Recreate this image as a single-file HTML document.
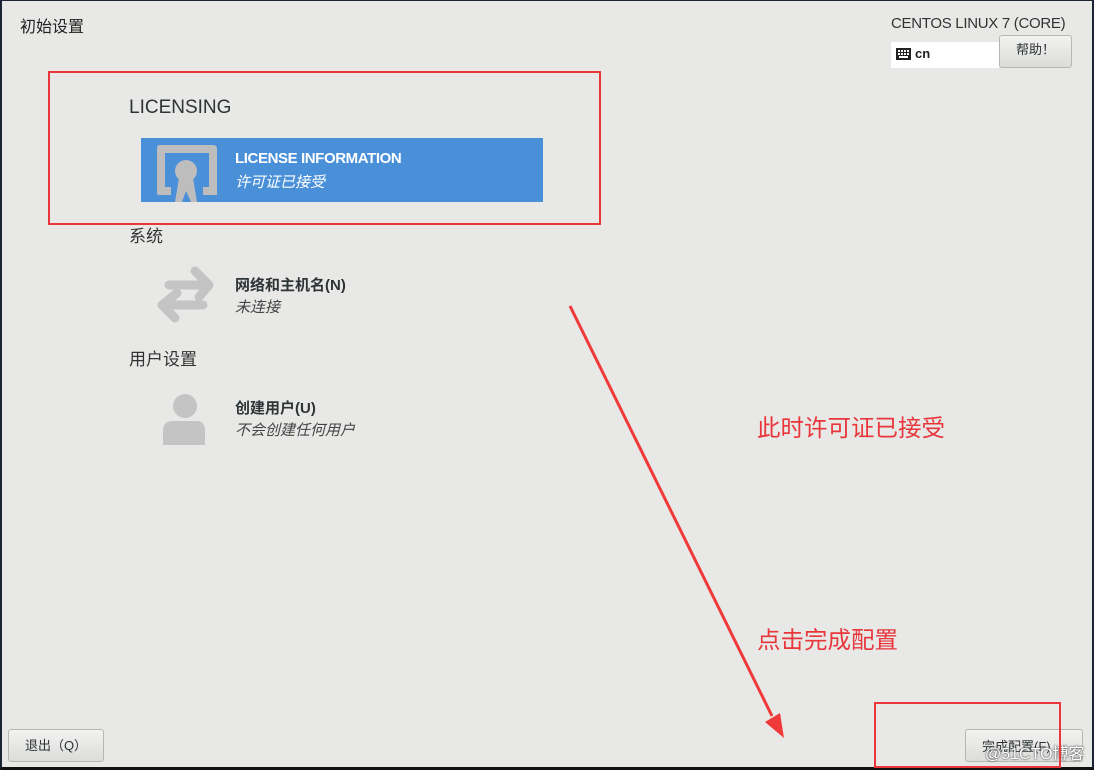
<!DOCTYPE html>
<html><head><meta charset="utf-8"><style>
*{margin:0;padding:0;box-sizing:border-box}
body{width:1094px;height:770px;background:#e8e8e7;position:relative;overflow:hidden;font-family:"Liberation Sans","Noto Sans CJK SC",sans-serif;color:#2e3436}
.frame{position:absolute;inset:0;border:2px solid #1c2333;border-top:1px solid #1c2333;border-bottom:3px solid #111}
.abs{position:absolute;white-space:nowrap}
.btn{position:absolute;border:1px solid #b6b6b3;border-radius:3px;background:linear-gradient(#f2f2f1,#dcdcda);font-size:13px;text-align:center}
.red{position:absolute;border:2px solid #e8363b}
</style></head><body>
<div class="frame"></div>
<div class="abs" style="left:20px;top:13px;font-size:16px;color:#222">初始设置</div>
<div class="abs" style="left:891px;top:15px;font-size:15px;color:#333;letter-spacing:-0.3px">CENTOS LINUX 7 (CORE)</div>
<div class="abs" style="left:891px;top:42px;width:108px;height:26px;background:#fff"></div>
<svg class="abs" style="left:896px;top:48px" width="15" height="12"><rect x="0" y="0" width="15" height="12" fill="#222"/><g fill="#fff"><rect x="2" y="2" width="2" height="2"/><rect x="5" y="2" width="2" height="2"/><rect x="8" y="2" width="2" height="2"/><rect x="11" y="2" width="2" height="2"/><rect x="2" y="5" width="2" height="2"/><rect x="5" y="5" width="2" height="2"/><rect x="8" y="5" width="2" height="2"/><rect x="11" y="5" width="2" height="2"/><rect x="3" y="8" width="9" height="2"/></g></svg>
<div class="abs" style="left:915px;top:46px;font-size:13px;font-weight:bold;color:#222">cn</div>
<div class="btn" style="left:999px;top:35px;width:73px;height:33px;line-height:28px">帮助！</div>

<div class="red" style="left:48px;top:71px;width:553px;height:154px"></div>
<div class="abs" style="left:129px;top:97px;font-size:19px;color:#2e3436">LICENSING</div>
<div class="abs" style="left:141px;top:138px;width:402px;height:64px;background:#4a90d9"></div>
<svg class="abs" style="left:155px;top:145px" width="64" height="57"><path d="M4 0H58Q62 0 62 4V50H48V42H54V8H10V42H16V50H4Q2 50 2 48V4Q2 0 4 0Z" fill="#bdbdbd"/><circle cx="31" cy="26" r="11" fill="#bdbdbd"/><path d="M24 33L20 57H27L31 46L36 57H42L38 33Z" fill="#bdbdbd"/></svg>
<div class="abs" style="left:235px;top:150px;font-size:15px;font-weight:bold;color:#fff;letter-spacing:-0.4px">LICENSE INFORMATION</div>
<div class="abs" style="left:235px;top:171px;font-size:15px;color:#fff;font-style:italic">许可证已接受</div>

<div class="abs" style="left:129px;top:222px;font-size:17px;color:#333">系统</div>
<svg class="abs" style="left:155px;top:265px" width="62" height="58" fill="none" stroke="#c4c4c4" stroke-width="9" stroke-linecap="round" stroke-linejoin="round"><path d="M14 20H50M40 6L54 20L44 32"/><path d="M48 40H12M22 28L7 40L20 53"/></svg>
<div class="abs" style="left:235px;top:274px;font-size:15px;font-weight:bold;color:#2e3436">网络和主机名(N)</div>
<div class="abs" style="left:235px;top:296px;font-size:15px;font-style:italic;color:#444">未连接</div>

<div class="abs" style="left:129px;top:345px;font-size:17px;color:#333">用户设置</div>
<svg class="abs" style="left:163px;top:393px" width="44" height="54"><circle cx="22" cy="13" r="12" fill="#c4c4c4"/><path d="M0 38Q0 28 10 28H34Q42 28 42 38V52H0Z" fill="#c4c4c4"/></svg>
<div class="abs" style="left:235px;top:397px;font-size:15px;font-weight:bold;color:#2e3436">创建用户(U)</div>
<div class="abs" style="left:235px;top:419px;font-size:15px;font-style:italic;color:#444">不会创建任何用户</div>

<div class="abs" style="left:757px;top:409px;font-size:23.5px;color:#e8363b">此时许可证已接受</div>
<div class="abs" style="left:757px;top:621px;font-size:23.5px;color:#e8363b">点击完成配置</div>
<svg class="abs" style="left:0;top:0" width="1094" height="770"><line x1="570" y1="306" x2="772" y2="716" stroke="#f03a3a" stroke-width="3"/><path d="M784 738L765 722L780 713Z" fill="#f03a3a"/></svg>

<div class="btn" style="left:8px;top:729px;width:96px;height:33px;line-height:31px">退出（Q）</div>
<div class="btn" style="left:965px;top:729px;width:118px;height:33px;line-height:34px;text-align:left;padding-left:16px">完成配置(F)</div>
<div class="abs" style="left:985px;top:740px;font-size:16px;color:#fff;text-shadow:0 0 2px #555,0 0 1px #333">@51CTO博客</div>
<div class="red" style="left:874px;top:702px;width:187px;height:66px"></div>
</body></html>
